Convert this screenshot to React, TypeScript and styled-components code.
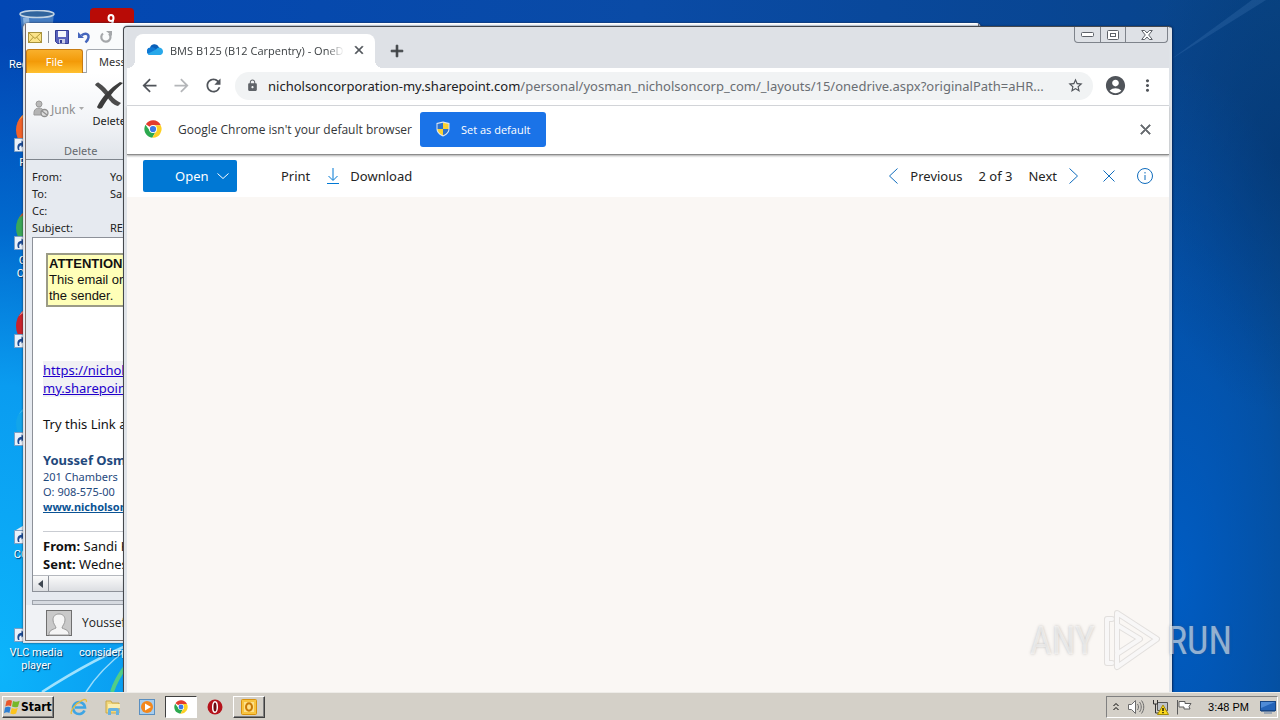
import React from "react";
import styled, { createGlobalStyle, css } from "styled-components";
import {
  MdAccountCircle,
  MdAdd,
  MdArrowBack,
  MdArrowForward,
  MdClose,
  MdLock,
  MdMoreVert,
  MdRefresh,
  MdStarBorder,
} from "react-icons/md";

const ui = `"Noto Sans", "Open Sans", sans-serif`;
const compact = `"Open Sans", "Noto Sans", sans-serif`;
const system = `"DejaVu Sans Condensed", "DejaVu Sans", sans-serif`;

const GlobalStyle = createGlobalStyle`
  *, *::before, *::after { box-sizing: border-box; }
  body { margin: 0; font-family: ${ui}; color: #222; overflow: hidden; }
  button, input { font: inherit; color: inherit; margin: 0; padding: 0; border: 0; background: none; }
  svg { display: block; flex: none; }
`;

const Screen = styled.div`
  display: flex;
  flex-direction: column;
  height: 100vh;
`;

const Desktop = styled.main`
  position: relative;
  flex: 1;
  min-height: 0;
  overflow: hidden;
  background:
    radial-gradient(ellipse 140px 260px at 100% 22%, rgba(0, 48, 110, 0.5), transparent),
    radial-gradient(ellipse 300px 620px at 0% 96%, #0cb4fb 0%, #0a9cf0 45%, rgba(0, 130, 225, 0.6) 70%, transparent 100%),
    radial-gradient(ellipse 170px 520px at 92% 84%, #005cc2 0%, rgba(0, 88, 186, 0.6) 60%, transparent 100%),
    linear-gradient(90deg, #0247b4 0%, #0a4ba6 50%, #084590 88%, #0a4684 100%);
`;

const Streaks = styled.svg`
  position: absolute;
  left: 0;
  bottom: 0;
`;

const Beam = styled.svg`
  position: absolute;
  right: 0;
  top: 0;
`;

/* Desktop shortcuts */

const Shortcut = styled.div<{ $x: number; $y: number }>`
  position: absolute;
  left: ${(p) => p.$x}px;
  top: ${(p) => p.$y}px;
  width: 72px;
  display: flex;
  flex-direction: column;
  align-items: center;
  gap: 4px;
  font-family: Roboto, sans-serif;
  font-size: 11px;
  line-height: 13px;
  text-align: center;
  color: #fff;
  text-shadow: 1px 1px 1px #02305f;
`;

const ShortcutIcon = styled.div`
  position: relative;
  width: 44px;
  height: 44px;
`;

const ShortcutBadge = styled.svg`
  position: absolute;
  left: 0;
  bottom: 0;
`;

/* Mail window */

const MailWindow = styled.section`
  position: absolute;
  left: 23px;
  top: 23px;
  right: 299px;
  bottom: 49px;
  display: flex;
  flex-direction: column;
  padding: 0 1px 1px;
  border: 1px solid #d9dde2;
  border-top-color: #fff;
  border-radius: 5px 5px 0 0;
  background: #e6eaf0;
  box-shadow: 0 0 2px #223;
`;

const MailInner = styled.div`
  flex: 1;
  min-height: 0;
  display: flex;
  flex-direction: column;
  border: 1px solid #7b6f6c;
  border-top: 0;
`;

const QuickBar = styled.div`
  display: flex;
  align-items: center;
  gap: 8px;
  height: 25px;
  padding-left: 2px;
  background: #fafbfc;
`;

const Divider = styled.span`
  width: 1px;
  height: 12px;
  margin: 0 -2px;
  background: #8a8f96;
`;

const RibbonTabs = styled.div`
  display: flex;
  gap: 3px;
  height: 24px;
  background: #fafbfc;
  border-bottom: 1px solid #9a9fa6;
`;

const RibbonTab = styled.button<{ $file?: boolean }>`
  height: 24px;
  padding: 0 12px;
  border: 1px solid #a4a9b0;
  border-bottom: 0;
  border-radius: 3px 3px 0 0;
  font-size: 11px;
  line-height: 22px;
  background: #fff;
  color: #333;
  ${(p) =>
    p.$file &&
    css`
      width: 57px;
      border-color: #c77b13;
      background: linear-gradient(#f9b02c, #f39a08 50%, #ffc02f);
      color: #fff;
    `}
`;

const Ribbon = styled.div`
  display: flex;
  flex-direction: column;
  height: 87px;
  padding: 8px 7px 0;
  background: linear-gradient(#fff, #f2f4f7 55%, #e0e4ea);
  border-bottom: 1px solid #7f858d;
`;

const RibbonItems = styled.div`
  display: flex;
  gap: 8px;
  height: 63px;
`;

const JunkButton = styled.button`
  display: flex;
  align-items: center;
  gap: 2px;
  height: 56px;
  font-size: 12px;
  color: #8f8f8f;
`;

const DeleteButton = styled.button`
  display: flex;
  flex-direction: column;
  align-items: center;
  gap: 4px;
  font-size: 11px;
  line-height: 16px;
  color: #222;
`;

const RibbonCaption = styled.span`
  padding-left: 31px;
  font-size: 11px;
  line-height: 14px;
  color: #66696e;
`;

const MailHeaders = styled.dl`
  display: grid;
  grid-template-columns: 78px 1fr;
  margin: 0;
  padding: 8px 6px 1px;
  font-size: 11px;
  line-height: 17px;
  white-space: nowrap;

  dt, dd { margin: 0; }
`;

const MailBody = styled.article`
  display: flex;
  flex-direction: column;
  flex: 1;
  min-height: 0;
  margin: 0 6px 8px;
  border: 1px solid #8d9199;
  background: #fff;
  font-size: 13px;
  line-height: 18px;
  color: #111;
`;

const MailText = styled.div`
  flex: 1;
  min-height: 0;
  overflow: hidden;
  padding: 15px 10px 0;

  p { margin: 0 0 18px; }
`;

const Warning = styled.div`
  margin: 0 3px 54px;
  padding: 1px;
  border: 2px solid #9b9b86;
  background: #ffffb8;
  font-family: "Liberation Sans", Arial, sans-serif;
  line-height: 16px;
`;

const MailLink = styled.a`
  color: #2200cc;
  background: #f1f1f4;
`;

const Signature = styled.div`
  margin-bottom: 17px;
  font-size: 11px;
  line-height: 15px;
  color: #1f497d;

  strong { display: block; font-size: 13px; line-height: 18px; }
  a { color: #0b5394; font-weight: 700; }
`;

const Quoted = styled.div`
  padding-top: 5px;
  border-top: 1px solid #c9ccd2;
`;

const ScrollTrack = styled.div`
  display: flex;
  height: 16px;
  border-top: 1px solid #b5b8be;
  background: linear-gradient(#fafafa, #dcdee2);
`;

const ScrollArrow = styled.button`
  display: grid;
  place-items: center;
  width: 16px;
  border-right: 1px solid #8d9199;
`;

const Splitter = styled.div`
  height: 5px;
  margin: 0 6px;
  border: 1px solid #9ea3ab;
  background: #d6dae0;
`;

const PeoplePane = styled.div`
  display: flex;
  align-items: center;
  gap: 10px;
  height: 35px;
  padding-left: 20px;
  background: #f0f2f5;
  font-family: ${compact};
  font-size: 12px;
`;

/* Browser window */

const BrowserWindow = styled.section`
  position: absolute;
  left: 123px;
  top: 26px;
  right: 108px;
  bottom: 0;
  display: flex;
  flex-direction: column;
  padding: 0 2px 0 3px;
  border: 1px solid #45484d;
  border-right-color: #dfe3e8;
  border-bottom: 0;
  border-radius: 4px 4px 0 0;
  background: #dfe3e8;
  box-shadow: 1px 0 2px #06275a;
`;

const TabStrip = styled.div`
  display: flex;
  align-items: flex-end;
  height: 41px;
  padding-left: 8px;
  background: #dee1e6;
`;

const Tab = styled.div`
  position: relative;
  display: flex;
  align-items: center;
  gap: 7px;
  width: 240px;
  height: 34px;
  padding: 0 8px 2px 12px;
  border-radius: 8px 8px 0 0;
  background: #fff;
  font-family: ${compact};
  font-size: 11px;
  color: #3c4043;

  &::before, &::after {
    content: "";
    position: absolute;
    bottom: 0;
    width: 8px;
    height: 8px;
  }
  &::before { left: -8px; background: radial-gradient(circle at 0 0, #dee1e6 8px, #fff 8px); }
  &::after { right: -8px; background: radial-gradient(circle at 100% 0, #dee1e6 8px, #fff 8px); }
`;

const TabTitle = styled.span`
  flex: 1;
  overflow: hidden;
  white-space: nowrap;
  mask-image: linear-gradient(90deg, #000 90%, transparent);
`;

const IconButton = styled.button<{ $size?: number; $color?: string; $bold?: boolean }>`
  display: grid;
  place-items: center;
  flex: none;
  width: ${(p) => p.$size ?? 28}px;
  height: ${(p) => p.$size ?? 28}px;
  color: ${(p) => p.$color ?? "#50545a"};
  ${(p) =>
    p.$bold &&
    css`
      path:not([fill="none"]) { stroke: currentColor; stroke-width: 1px; }
    `}
`;

const NewTab = styled(IconButton)`
  margin: 0 0 3px 8px;
`;

const Caption = styled.div`
  display: flex;
  align-self: flex-start;
  margin: 0 1px 0 auto;
  height: 16px;
  border: 1px solid #7e838b;
  border-top: 0;
  border-radius: 0 0 4px 4px;
`;

const CaptionButton = styled.button<{ $wide?: boolean }>`
  display: grid;
  place-items: center;
  width: ${(p) => (p.$wide ? 42 : 25)}px;

  & + & { border-left: 1px solid #7e838b; }
`;

const Toolbar = styled.div`
  display: flex;
  align-items: center;
  gap: 8px;
  height: 38px;
  padding: 0 8px 2px;
  border-bottom: 1px solid #d5d8dc;
  background: #fff;
`;

const ToolGroup = styled.div`
  display: flex;
  gap: 4px;
`;

const Omnibox = styled.label`
  display: flex;
  align-items: center;
  flex: 1;
  min-width: 0;
  height: 28px;
  padding: 0 4px 0 11px;
  border-radius: 14px;
  background: #f1f3f4;
  font-size: 13px;
  color: #202124;
`;

const Host = styled.span`
  margin-left: 9px;
`;

const PathInput = styled.input`
  flex: 1;
  min-width: 0;
  color: #6a6e73;
  text-overflow: ellipsis;
`;

const InfoBar = styled.div`
  position: relative;
  display: flex;
  align-items: center;
  height: 49px;
  padding: 0 10px 2px 17px;
  border-bottom: 1px solid #8c8c8c;
  background: #fff;
  box-shadow: 0 1px 2px #aaa;
  font-family: ${compact};
  font-size: 12px;
  color: #333639;
`;

const InfoText = styled.span`
  flex: 1;
  display: flex;
  align-items: center;
  gap: 8px;
  margin-left: 16px;
`;

const DefaultButton = styled.button`
  display: flex;
  align-items: center;
  gap: 11px;
  height: 35px;
  padding: 0 16px;
  border-radius: 3px;
  background: #1a73e8;
  color: #fff;
  font-size: 11px;
`;

const CommandBar = styled.div`
  display: flex;
  align-items: center;
  justify-content: space-between;
  height: 42px;
  padding: 0 14px 0 16px;
  background: #fff;
  font-size: 13px;
  color: #242424;
`;

const CommandGroup = styled.div`
  display: flex;
  align-items: center;
  gap: 16px;
`;

const Command = styled.button`
  display: flex;
  align-items: center;
  gap: 10px;
  height: 32px;
`;

const OpenButton = styled(Command)`
  gap: 8px;
  width: 94px;
  margin-right: 28px;
  padding-left: 32px;
  border-radius: 2px;
  background: #0078d4;
  color: #fff;
`;

const IconCommand = styled(Command)`
  justify-content: center;
  width: 20px;
`;

const PreviewActions = styled(CommandGroup)`
  margin-left: 4px;
`;

const Viewer = styled.div`
  flex: 1;
  background: #faf7f4;
`;

/* Watermark */

const Watermark = styled.div`
  position: absolute;
  right: 48px;
  bottom: 18px;
  display: flex;
  align-items: center;
  gap: 6px;
  font-family: "Liberation Sans Narrow", "Roboto Condensed", Roboto, sans-serif;
  font-size: 38px;
  line-height: 66px;
  color: rgba(255, 255, 255, 0.55);
  text-shadow: 0 0 3px rgba(90, 90, 90, 0.35);
  pointer-events: none;
`;

/* Taskbar */

const Taskbar = styled.footer`
  display: flex;
  align-items: center;
  height: 28px;
  padding: 0 2px;
  border-top: 1px solid #eeece8;
  background: #d4d0c8;
  font-family: ${system};
`;

const raised = css`
  border: 1px solid;
  border-color: #fff #404040 #404040 #fff;
  box-shadow: inset -1px -1px #808080;
`;

const StartButton = styled.button`
  ${raised}
  display: flex;
  align-items: center;
  gap: 1px;
  width: 52px;
  height: 22px;
  margin-right: 9px;
  padding-left: 1px;
  font-size: 12px;
  font-weight: 700;
  color: #000;
`;

const TaskList = styled.nav`
  display: flex;
  gap: 2px;
`;

const TaskButton = styled.button<{ $state?: "active" | "open" }>`
  display: grid;
  place-items: center;
  width: 32px;
  height: 22px;
  ${(p) => p.$state === "open" && raised}
  ${(p) =>
    p.$state === "active" &&
    css`
      border: 1px solid;
      border-color: #404040 #fff #fff #404040;
      background: #fff;
    `}
`;

const Tray = styled.div`
  display: flex;
  align-items: center;
  gap: 7px;
  height: 22px;
  margin-left: auto;
  padding: 0 1px 0 5px;
  border: 1px solid;
  border-color: #808080 #fff #fff #808080;
  font-size: 11px;
  color: #000;
`;

const Clock = styled.time`
  margin: 0 4px 0 9px;
  font-family: "Liberation Sans", Arial, sans-serif;
`;

/* Drawings */

const ChromeLogo = ({ size }: { size: number }) => (
  <svg width={size} height={size} viewBox="0 0 48 48">
    <path d="M24 24 4.9 11A23 23 0 0 1 44 12.5L45 14H24z" fill="#e33b2e" />
    <path d="M4 12.500A23 23 0 0 0 22 47l9-16-7-7-8 5z" fill="#2da94f" />
    <path d="M44.500 14H24l9 15-11 18A23 23 0 0 0 44.500 14z" fill="#fdd023" />
    <circle cx="24" cy="24" r="10.500" fill="#fff" />
    <circle cx="24" cy="24" r="8.300" fill="#3b78e7" />
  </svg>
);

const CloudLogo = () => (
  <svg width="16" height="16" viewBox="0 0 16 16">
    <path d="M3 6.500A4.600 4.600 0 0 1 11.800 5L14 10H3z" fill="#0a5fb8" />
    <path d="M3.500 5.600c2-.6 3.500 0 4.500.8l5 4-9.500 2.600A3.700 3.700 0 0 1 3.500 5.600z" fill="#0f78d4" />
    <path d="M9 7.600c.8-1.400 2-2.100 3.400-2 2 .2 3.600 1.900 3.600 3.900 0 1.800-1 3.300-2.600 3.500H3.300c-1 0-1.900-.5-2.500-1.300z" fill="#28a8ea" />
  </svg>
);

const ShieldIcon = () => (
  <svg width="14" height="16" viewBox="0 0 14 16">
    <path d="M7 .5 13.500 2v6c0 3.500-3 6-6.500 7.500C3.500 14 .5 11.500.5 8V2z" fill="#dfe7f2" />
    <path d="M7 1.800V8H1.500V3z" fill="#2a72cf" />
    <path d="M7 1.800V8h5.500V3z" fill="#fbd233" />
    <path d="M7 14.200V8H1.500c0 2.900 2.500 5 5.500 6.200z" fill="#fbd233" />
    <path d="M7 14.200V8h5.500c0 2.900-2.500 5-5.500 6.200z" fill="#2a72cf" />
  </svg>
);

const Chevron = ({ d, w, h, color }: { d: string; w: number; h: number; color: string }) => (
  <svg width={w} height={h} viewBox={`0 0 ${w} ${h}`} fill="none" stroke={color}>
    <path d={d} />
  </svg>
);

const ShortcutArrow = () => (
  <ShortcutBadge width="14" height="14" viewBox="0 0 14 14">
    <path d="M.5.5h13v13H.5z" fill="#e9f1fa" stroke="#7c9fc4" />
    <path d="M4 12C2.500 8 4 5 7.500 4.800V2.500L12 6 7.500 9.500V7.500C5.500 7.700 4.500 9 5.500 12z" fill="#1b4a94" />
  </ShortcutBadge>
);

const BallIcon = ({ fill, edge }: { fill: string; edge: string }) => (
  <ShortcutIcon>
    <svg width="44" height="44" viewBox="0 0 44 44">
      <circle cx="22" cy="22" r="20" fill={fill} />
      <path d="M22 2a20 20 0 0 0-17 10c6-5 11-5 17-3z" fill={edge} />
    </svg>
    <ShortcutArrow />
  </ShortcutIcon>
);

const BinIcon = () => (
  <svg width="44" height="44" viewBox="0 0 44 44">
    <path d="M5 3h34l-4 38H9z" fill="#5b8ec6" opacity=".75" />
    <path d="M8 8h6l3 32h-6z" fill="#a9cbe9" opacity=".7" />
    <ellipse cx="22" cy="4" rx="17" ry="3.500" fill="#31659e" stroke="#c3d4e4" strokeWidth="1.500" />
  </svg>
);

const PdfIcon = () => (
  <svg width="44" height="44" viewBox="0 0 44 44">
    <rect width="44" height="44" rx="4" fill="#b80b06" />
    <ellipse cx="21" cy="10" rx="2.500" ry="3" fill="none" stroke="#fff" strokeWidth="2" />
    <path d="M23 12c0 8-5 14-11 20M22 14c3 8 7 12 12 13" stroke="#fff" strokeWidth="2" fill="none" />
  </svg>
);

const MailIcon = () => (
  <svg width="14" height="14" viewBox="0 0 14 14">
    <rect x=".5" y="2.500" width="13" height="10" fill="#fbe38a" stroke="#a8923d" />
    <path d="m1 3 6 5.500L13 3M1 12l4.500-5M13 12 8.500 7" fill="none" stroke="#b39a38" />
  </svg>
);

const SaveIcon = () => (
  <svg width="14" height="14" viewBox="0 0 14 14">
    <path d="M.5.5h13v13h-11l-2-2z" fill="#5a63bd" stroke="#333c94" />
    <path d="M3 1h8v6H3z" fill="#f4f6fb" />
    <path d="M4 9h6v4.500H4z" fill="#c9cde6" />
    <path d="M5 10h2v3H5z" fill="#333c94" />
  </svg>
);

const UndoIcon = () => (
  <svg width="14" height="14" viewBox="0 0 14 14" fill="none">
    <path d="M4.500 5.500C8 2.500 12 3.500 11.500 7.500c-.3 2.200-1.500 3.500-3 5" stroke="#4566bd" strokeWidth="2.400" />
    <path d="M1 2v6h6z" fill="#4566bd" />
  </svg>
);

const RedoIcon = () => (
  <svg width="14" height="14" viewBox="0 0 14 14" fill="none">
    <path d="M4 3.500a4.600 4.600 0 1 0 6 .2" stroke="#a5a7aa" strokeWidth="2.200" />
    <path d="M7 1h6v5z" fill="#a5a7aa" />
  </svg>
);

const JunkIcon = () => (
  <svg width="16" height="18" viewBox="0 0 16 18">
    <circle cx="6" cy="4" r="3" fill="#b9b9b9" stroke="#999" />
    <path d="M1 15c-.5-4 1-7 5-7s5.500 3 5 7z" fill="#b4b4b4" stroke="#999" />
    <circle cx="11.500" cy="13" r="3.500" fill="#ddd" stroke="#8f8f8f" strokeWidth="1.300" />
    <path d="m9 11 5 4" stroke="#8f8f8f" strokeWidth="1.300" />
  </svg>
);

const CrossIcon = () => (
  <svg width="30" height="28" viewBox="0 0 30 28">
    <path d="M1 4c1-2 3-3 4-2 5 3 8 7 12 12 3 4 6 6 10 8l-3 3c-5-1-8-5-11-9C9 11 5 7 1 4z" fill="#4c4c4c" />
    <path d="M26 1l3 1C20 9 14 17 8 27c-2 1-4 1-5-1C8 16 16 7 26 1z" fill="#3c3c3c" />
  </svg>
);

const PersonIcon = () => (
  <svg width="26" height="26" viewBox="0 0 26 26">
    <rect x=".5" y=".5" width="25" height="25" fill="#c9c9c9" stroke="#6f6f6f" />
    <path d="M3 25c0-5 3-5 7-7 0-2-3-4-3-8 0-4 2.500-6 6-6s6 2 6 6c0 4-3 6-3 8 4 2 7 2 7 7z" fill="#f5f5f5" stroke="#999" />
  </svg>
);

const WindowsFlag = () => (
  <svg width="16" height="16" viewBox="0 0 16 16">
    <path d="M2.500 2c2-1.400 4-1.300 5.500-.3L7 7.300c-1.500-1-3.500-1-5.700.2z" fill="#e8562a" />
    <path d="M9 2c2 1 4 1 6.700-.3l-1.700 6C11.800 8.700 10 8.500 8 7.600z" fill="#76b82a" />
    <path d="M1 8.600c2.200-1.200 4.200-1.100 5.700-.1l-1.300 5.500c-1.500-1-3.500-1-5.400.2z" fill="#2d7fd3" />
    <path d="M7.800 8.900c2 1 3.900 1 6-.1l-1.700 5.700c-2 1-3.800 1-5.800 0z" fill="#fcc41d" />
  </svg>
);

const ExplorerE = () => (
  <svg width="18" height="18" viewBox="0 0 18 18" fill="none">
    <path d="M14.500 12.500A6 6 0 1 1 15 9.500H5" stroke="#3ea5e4" strokeWidth="2.600" />
    <path d="M1.500 16C-.5 13 6 5 12 2.300c3-1.400 5-1 4.300 1.700" stroke="#e9bd3a" strokeWidth="1.300" />
  </svg>
);

const FolderIcon = () => (
  <svg width="18" height="18" viewBox="0 0 18 18">
    <path d="M2 3h5l1 2h7v10H2z" fill="#f1d77c" stroke="#c9a94b" />
    <path d="M4 6h12v4H4z" fill="#fbeeb0" />
    <path d="M4 17v-5c0-1 .5-2 2-2h7c1.500 0 2 1 2 2v5h-3v-4H7v4z" fill="#67b2e0" />
  </svg>
);

const PlayerIcon = () => (
  <svg width="16" height="16" viewBox="0 0 16 16">
    <rect x=".5" y=".5" width="15" height="15" fill="#a7cdee" stroke="#5a8fc0" />
    <circle cx="8" cy="8" r="6" fill="#f3871c" />
    <path d="M6 4.500v7L12 8z" fill="#fff" />
  </svg>
);

const OperaIcon = () => (
  <svg width="16" height="16" viewBox="0 0 16 16">
    <circle cx="8" cy="8" r="7.500" fill="#b5121b" />
    <ellipse cx="8" cy="8" rx="2.300" ry="5.300" fill="#6d0a10" stroke="#fff" strokeWidth="1.500" />
  </svg>
);

const OutlookIcon = () => (
  <svg width="16" height="16" viewBox="0 0 16 16">
    <rect x=".5" y=".5" width="15" height="15" rx="1" fill="#f8c440" stroke="#d9920d" />
    <path d="M3 3h10v10H3z" fill="#fde08a" />
    <ellipse cx="8" cy="8" rx="3" ry="3.700" fill="none" stroke="#c97a06" strokeWidth="2" />
  </svg>
);

const SpeakerIcon = () => (
  <svg width="18" height="16" viewBox="0 0 18 16" fill="none" stroke="#6c6c6c">
    <path d="M1.500 5.500h3l4-4v13l-4-4h-3z" fill="#fff" />
    <path d="M10.500 5c1.300 2 1.300 4 0 6M12.500 3c2.300 3 2.300 7 0 10M14.500 1.500c3 4 3 9 0 13" />
  </svg>
);

const NetworkIcon = () => (
  <svg width="17" height="16" viewBox="0 0 17 16">
    <path d="M5.500 3.500h10v8h-10z" fill="#bfc3c8" stroke="#555" />
    <path d="M1.500 1v4h4V1M3.500 5v9h5" fill="none" stroke="#333" />
    <path d="M11 6 16.500 15.500h-11z" fill="#fbd81c" stroke="#a58a05" />
    <path d="M11 9v3M11 13v1.200" stroke="#000" strokeWidth="1.300" />
  </svg>
);

const FlagIcon = () => (
  <svg width="16" height="16" viewBox="0 0 16 16" fill="#fff" stroke="#5c5c5c">
    <path d="M1.500 1v14.500M3 2.500h6v2h6l-2 3 1 2.500H8v-2H3z" />
  </svg>
);

const DisplayIcon = () => (
  <svg width="16" height="14" viewBox="0 0 16 14">
    <rect x=".5" y="1.500" width="15" height="9" fill="#2464b8" stroke="#174684" />
    <path d="M1 2h14L1 8z" fill="#4f8bd6" />
    <path d="M1 11.500h14M4 13h8" stroke="#657fa0" />
  </svg>
);

const PlayMark = () => (
  <svg width="60" height="66" viewBox="0 0 60 66" fill="none" strokeLinejoin="round" strokeLinecap="round">
    <g stroke="rgba(140,140,140,.22)" strokeWidth="6">
      <path d="M11 11H6v44h5M16 44V5l40 26-40 28V46l23-15-23-14" />
    </g>
    <g stroke="rgba(255,255,255,.75)" strokeWidth="4">
      <path d="M11 11H6v44h5M16 44V5l40 26-40 28V46l23-15-23-14" />
    </g>
  </svg>
);

export default function App() {
  return (
    <Screen>
      <GlobalStyle />
      <Desktop>
        <Beam width="160" height="60" viewBox="0 0 160 60">
          <path d="M50 60 132 0h14z" fill="#6fa0d8" opacity=".16" />
        </Beam>
        <Streaks width="160" height="60" viewBox="0 0 160 60" fill="none">
          <path d="M42 60C70 42 100 24 140 8" stroke="#b9ecff" strokeWidth="2.500" opacity=".85" />
          <path d="M86 60c10-16 24-30 40-42" stroke="#d6f4ff" strokeWidth="1.500" opacity=".7" />
          <path d="M112 60c3-10 8-18 14-26" stroke="#63d86b" strokeWidth="4" opacity=".8" />
        </Streaks>

        <Shortcut $x={1} $y={10}>
          <BinIcon />
          Recycle Bin
        </Shortcut>
        <Shortcut $x={76} $y={8}>
          <PdfIcon />
        </Shortcut>
        <Shortcut $x={0} $y={108}>
          <BallIcon fill="#f2632a" edge="#ff9b3d" />
          Firefox
        </Shortcut>
        <Shortcut $x={0} $y={206}>
          <BallIcon fill="#3aa757" edge="#d64a2c" />
          Google Chrome
        </Shortcut>
        <Shortcut $x={0} $y={304}>
          <BallIcon fill="#c9222b" edge="#ee8a88" />
        </Shortcut>
        <Shortcut $x={0} $y={402}>
          <BallIcon fill="#12a5ea" edge="#3cb9f3" />
        </Shortcut>
        <Shortcut $x={0} $y={500}>
          <ShortcutIcon>
            <svg width="44" height="44" viewBox="0 0 44 44">
              <path d="M2 30 12 24h22v18H2z" fill="#dfe9f2" />
            </svg>
            <ShortcutArrow />
          </ShortcutIcon>
          CCleaner
        </Shortcut>
        <Shortcut $x={0} $y={598}>
          <ShortcutIcon>
            <ShortcutArrow />
          </ShortcutIcon>
          VLC media player
        </Shortcut>
        <Shortcut $x={74} $y={598}>
          <ShortcutIcon />
          considerplay
        </Shortcut>

        <MailWindow aria-label="Mail message">
          <MailInner>
            <QuickBar>
              <MailIcon />
              <Divider />
              <SaveIcon />
              <UndoIcon />
              <RedoIcon />
            </QuickBar>
            <RibbonTabs>
              <RibbonTab $file>File</RibbonTab>
              <RibbonTab>Message</RibbonTab>
            </RibbonTabs>
            <Ribbon>
              <RibbonItems>
                <JunkButton>
                  <JunkIcon />
                  Junk
                  <svg width="7" height="4" viewBox="0 0 7 4">
                    <path d="M1 0h5L3.500 3z" fill="#aaa" />
                  </svg>
                </JunkButton>
                <DeleteButton>
                  <CrossIcon />
                  Delete
                </DeleteButton>
              </RibbonItems>
              <RibbonCaption>Delete</RibbonCaption>
            </Ribbon>
            <MailHeaders>
              <dt>From:</dt>
              <dd>Youssef Osman</dd>
              <dt>To:</dt>
              <dd>Sandi</dd>
              <dt>Cc:</dt>
              <dd />
              <dt>Subject:</dt>
              <dd>RE:</dd>
            </MailHeaders>
            <MailBody>
              <MailText>
                <Warning>
                  <strong>ATTENTION:</strong>
                  <br />
                  This email originated
                  <br />
                  the sender.
                </Warning>
                <p>
                  <MailLink href="#">
                    https://nicholsoncorporation-
                    <br />
                    my.sharepoint.com
                  </MailLink>
                </p>
                <p>Try this Link again</p>
                <Signature>
                  <strong>Youssef Osman</strong>
                  201 Chambers
                  <br />
                  O: 908-575-00
                  <br />
                  <a href="#">www.nicholsoncorp.com</a>
                </Signature>
                <Quoted>
                  <strong>From:</strong> Sandi K
                  <br />
                  <strong>Sent:</strong> Wednesday
                </Quoted>
              </MailText>
              <ScrollTrack>
                <ScrollArrow aria-label="Scroll left">
                  <svg width="5" height="8" viewBox="0 0 5 8">
                    <path d="M5 0v8L0 4z" fill="#3e4650" />
                  </svg>
                </ScrollArrow>
              </ScrollTrack>
            </MailBody>
            <Splitter />
            <PeoplePane>
              <PersonIcon />
              Youssef Osman
            </PeoplePane>
          </MailInner>
        </MailWindow>

        <BrowserWindow aria-label="Browser">
          <TabStrip>
            <Tab>
              <CloudLogo />
              <TabTitle>BMS B125 (B12 Carpentry) - OneDrive</TabTitle>
              <IconButton $size={16} $bold aria-label="Close tab">
                <MdClose size={14} />
              </IconButton>
            </Tab>
            <NewTab $bold aria-label="New tab" $color="#3c4043">
              <MdAdd size={20} />
            </NewTab>
            <Caption>
              <CaptionButton aria-label="Minimize">
                <svg width="13" height="5" viewBox="0 0 13 5" fill="#fff" stroke="#5d6168">
                  <rect x=".5" y=".5" width="12" height="4" rx="1" />
                </svg>
              </CaptionButton>
              <CaptionButton aria-label="Restore">
                <svg width="12" height="10" viewBox="0 0 12 10" fill="#fff" stroke="#5d6168">
                  <rect x=".5" y=".5" width="11" height="9" rx="1" />
                  <rect x="3.500" y="3.500" width="5" height="3" />
                </svg>
              </CaptionButton>
              <CaptionButton $wide aria-label="Close">
                <svg width="12" height="10" viewBox="0 0 12 10" fill="#fff" stroke="#5d6168">
                  <path d="M.7.5h3L6 3 8.300.5h3L7.700 5l3.600 4.500h-3L6 7 3.700 9.500h-3L4.300 5z" />
                </svg>
              </CaptionButton>
            </Caption>
          </TabStrip>
          <Toolbar>
            <ToolGroup>
              <IconButton aria-label="Back">
                <MdArrowBack size={21} />
              </IconButton>
              <IconButton aria-label="Forward" $color="#b4b6b9">
                <MdArrowForward size={21} />
              </IconButton>
              <IconButton aria-label="Reload">
                <MdRefresh size={21} />
              </IconButton>
            </ToolGroup>
            <Omnibox>
              <MdLock size={13} color="#5f6368" />
              <Host>nicholsoncorporation-my.sharepoint.com</Host>
              <PathInput
                aria-label="Address"
                defaultValue="/personal/yosman_nicholsoncorp_com/_layouts/15/onedrive.aspx?originalPath=aHR..."
              />
              <IconButton aria-label="Bookmark">
                <MdStarBorder size={17} />
              </IconButton>
            </Omnibox>
            <ToolGroup>
              <IconButton aria-label="Profile">
                <MdAccountCircle size={23} />
              </IconButton>
              <IconButton aria-label="Menu">
                <MdMoreVert size={19} />
              </IconButton>
            </ToolGroup>
          </Toolbar>
          <InfoBar>
            <ChromeLogo size={18} />
            <InfoText>
              Google Chrome isn't your default browser
              <DefaultButton>
                <ShieldIcon />
                Set as default
              </DefaultButton>
            </InfoText>
            <IconButton $bold aria-label="Dismiss" $color="#666a6f">
              <MdClose size={17} />
            </IconButton>
          </InfoBar>
          <CommandBar>
            <CommandGroup>
              <OpenButton>
                Open
                <Chevron w={12} h={8} d="m.5 1.500 5.500 5 5.500-5" color="#fff" />
              </OpenButton>
              <Command>Print</Command>
              <Command>
                <Chevron w={14} h={16} d="M7 0v12M2.500 8 7 12.500 11.500 8M1 15.500h12" color="#0078d4" />
                Download
              </Command>
            </CommandGroup>
            <CommandGroup>
              <Command>
                <Chevron w={12} h={16} d="M9.500.5 1.500 8l8 7.500" color="#0f6cbd" />
                Previous
              </Command>
              <span>2 of 3</span>
              <Command>
                Next
                <Chevron w={12} h={16} d="m2.500.5 8 7.500-8 7.500" color="#0f6cbd" />
              </Command>
              <PreviewActions>
                <IconCommand aria-label="Close preview">
                  <Chevron w={12} h={12} d="m.5.5 11 11M11.500.5l-11 11" color="#0f6cbd" />
                </IconCommand>
                <IconCommand aria-label="Information">
                  <Chevron
                    w={16}
                    h={16}
                    d="M8 .5a7.500 7.500 0 1 0 0 15a7.500 7.500 0 1 0 0-15M8 7v5M8 4v1.500"
                    color="#0f6cbd"
                  />
                </IconCommand>
              </PreviewActions>
            </CommandGroup>
          </CommandBar>
          <Viewer />
        </BrowserWindow>

        <Watermark>
          ANY
          <PlayMark />
          RUN
        </Watermark>
      </Desktop>

      <Taskbar>
        <StartButton>
          <WindowsFlag />
          Start
        </StartButton>
        <TaskList>
          <TaskButton aria-label="Internet Explorer">
            <ExplorerE />
          </TaskButton>
          <TaskButton aria-label="File Explorer">
            <FolderIcon />
          </TaskButton>
          <TaskButton aria-label="Media Player">
            <PlayerIcon />
          </TaskButton>
          <TaskButton $state="active" aria-label="Chrome">
            <ChromeLogo size={14} />
          </TaskButton>
          <TaskButton aria-label="Opera">
            <OperaIcon />
          </TaskButton>
          <TaskButton $state="open" aria-label="Outlook">
            <OutlookIcon />
          </TaskButton>
        </TaskList>
        <Tray>
          <Chevron w={8} h={9} d="M1.500 4 4 1.500 6.500 4M1.500 8 4 5.500 6.500 8" color="#000" />
          <SpeakerIcon />
          <NetworkIcon />
          <FlagIcon />
          <Clock>3:48 PM</Clock>
          <DisplayIcon />
        </Tray>
      </Taskbar>
    </Screen>
  );
}
